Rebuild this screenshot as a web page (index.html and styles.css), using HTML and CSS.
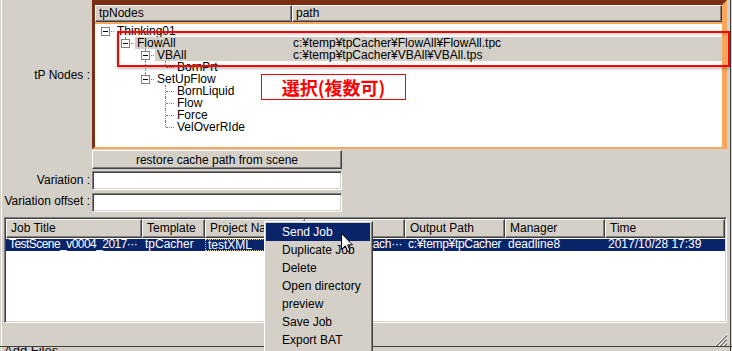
FILE: index.html
```html
<!DOCTYPE html>
<html lang="en">
<head>
  <meta charset="UTF-8" />
  <title>tpCacher Submitter</title>
  <link rel="stylesheet" href="styles.css">
</head>
<body>
  <div class="window">

    <div class="form">
      <div class="label">tP Nodes :</div>
      <div class="tree-frame">
        <div class="tree-head">
          <div class="head-cell">tpNodes</div>
          <div class="head-cell">path</div>
        </div>
        <div class="tree-body">
          <div class="tree-row">
            <div class="tree-cell"><span class="twig root"><i class="box"></i></span><span class="node">Thinking01</span></div>
            <div class="path-cell"></div>
          </div>
          <div class="tree-row sel">
            <div class="tree-cell"><span class="guide"></span><span class="twig end"><i class="box"></i></span><span class="node">FlowAll</span></div>
            <div class="path-cell">c:¥temp¥tpCacher¥FlowAll¥FlowAll.tpc</div>
          </div>
          <div class="tree-row sel">
            <div class="tree-cell"><span class="guide"></span><span class="guide"></span><span class="twig"><i class="box"></i></span><span class="node">VBAll</span></div>
            <div class="path-cell">c:¥temp¥tpCacher¥VBAll¥VBAll.tps</div>
          </div>
          <div class="tree-row">
            <div class="tree-cell"><span class="guide"></span><span class="guide"></span><span class="guide pipe"></span><span class="twig end"></span><span class="node">BornPrt</span></div>
            <div class="path-cell"></div>
          </div>
          <div class="tree-row">
            <div class="tree-cell"><span class="guide"></span><span class="guide"></span><span class="twig end"><i class="box"></i></span><span class="node">SetUpFlow</span></div>
            <div class="path-cell"></div>
          </div>
          <div class="tree-row">
            <div class="tree-cell"><span class="guide"></span><span class="guide"></span><span class="guide"></span><span class="twig"></span><span class="node">BornLiquid</span></div>
            <div class="path-cell"></div>
          </div>
          <div class="tree-row">
            <div class="tree-cell"><span class="guide"></span><span class="guide"></span><span class="guide"></span><span class="twig"></span><span class="node">Flow</span></div>
            <div class="path-cell"></div>
          </div>
          <div class="tree-row">
            <div class="tree-cell"><span class="guide"></span><span class="guide"></span><span class="guide"></span><span class="twig"></span><span class="node">Force</span></div>
            <div class="path-cell"></div>
          </div>
          <div class="tree-row">
            <div class="tree-cell"><span class="guide"></span><span class="guide"></span><span class="guide"></span><span class="twig end"></span><span class="node">VelOverRIde</span></div>
            <div class="path-cell"></div>
          </div>
        </div>
      </div>

      <div></div>
      <button class="btn">restore cache path from scene</button>

      <div class="label">Variation :</div>
      <input class="field field-first" type="text">

      <div class="label">Variation offset :</div>
      <input class="field field-second" type="text">
    </div>

    <div class="jobs">
      <div class="jobs-head">
        <div class="col-head">Job Title</div>
        <div class="col-head">Template</div>
        <div class="col-head">Project Name</div>
        <div class="col-head">Cache Path</div>
        <div class="col-head">Output Path</div>
        <div class="col-head">Manager</div>
        <div class="col-head">Time</div>
      </div>
      <div class="job-row">
        <div class="cell tighter">TestScene_v0004_2017···</div>
        <div class="cell">tpCacher</div>
        <div class="cell focus">testXML</div>
        <div class="cell tight">c:¥temp¥tpCach···</div>
        <div class="cell tight">c:¥temp¥tpCacher</div>
        <div class="cell">deadline8</div>
        <div class="cell">2017/10/28 17:39</div>
      </div>
    </div>

    <div class="foot"></div>
    <div class="foot-strip"><span>Add Files</span></div>

    <!-- annotation overlays -->
    <div class="mark"></div>
    <div class="note">選択(複数可)</div>

    <!-- context menu -->
    <ul class="menu">
      <li class="hl">Send Job</li>
      <li>Duplicate Job</li>
      <li>Delete</li>
      <li>Open directory</li>
      <li>preview</li>
      <li>Save Job</li>
      <li>Export BAT</li>
    </ul>

    <svg class="cursor" width="12" height="19" viewBox="0 0 12 19">
      <path d="M0.5 0.5 V16.5 L4.3 12.8 L6.8 18.5 L9 17.5 L6.6 11.9 H11.5 Z" fill="#fff" stroke="#000" stroke-width="1" stroke-linejoin="miter"/>
    </svg>

    <svg class="grip" width="14" height="14" viewBox="0 0 14 14">
      <path d="M13 1 L1 13 M13 5 L5 13 M13 9 L9 13" stroke="#fff" stroke-width="1"/>
      <path d="M13 2 L2 13 M13 3 L3 13 M13 6 L6 13 M13 7 L7 13 M13 10 L10 13 M13 11 L11 13" stroke="#808080" stroke-width="1"/>
    </svg>
  </div>
</body>
</html>
```

FILE: styles.css
```css
body {
  margin: 0;
  font-family: "Liberation Sans", Arial, sans-serif;
  font-size: 12px;
  color: #000;
  background-color: #d4d0c8;
}

.window {
  position: relative;
  width: 732px;
  height: 351px;
  overflow: hidden;
  background: linear-gradient(to right, #d4d0c8 1px, #fff 1px 2px, #d4d0c8 2px 730px, #404040 730px 731px, #d4d0c8 731px);
}

/* top form */
.form {
  display: grid;
  grid-template-columns: 92px auto;
  justify-items: start;
  align-items: center;
}

.label {
  justify-self: end;
  padding-right: 2px;
  white-space: nowrap;
}

.tree-frame {
  width: 635px;
  height: 149px;
  box-sizing: border-box;
  border-style: solid;
  border-width: 5px 5px 2px 3px;
  border-color: #7c2e14 #f7a65a #f7a65a #7c2e14;
  display: flex;
  flex-direction: column;
  background: #fff;
}

.tree-head {
  display: grid;
  grid-template-columns: 197px 1fr;
  height: 17px;
  border-bottom: 2px solid #f7a65a;
}

.head-cell,
.col-head {
  background: #d4d0c8;
  border-top: 1px solid #fff;
  border-left: 1px solid #fff;
  border-right: 1px solid #404040;
  border-bottom: 1px solid #404040;
  box-shadow: inset -1px -1px #808080;
  padding-left: 3px;
  line-height: 15px;
  white-space: nowrap;
  overflow: hidden;
}

.tree-body {
  flex: 1;
  padding-top: 1px;
  overflow: hidden;
}

.tree-row {
  display: grid;
  grid-template-columns: 198px 1fr;
  height: 12px;
  line-height: 12px;
  white-space: nowrap;
}

.tree-cell {
  display: flex;
  padding-left: 3px;
}

.node {
  flex: 1;
  padding: 0 2px;
}

.path-cell {
  overflow-x: clip;
}

.tree-row.sel .node,
.tree-row.sel .path-cell {
  background-color: #d4d0c8;
}

.guide,
.twig {
  position: relative;
  flex: none;
  height: 12px;
}

.guide {
  width: 20px;
}

.twig {
  width: 17px;
}

.guide.pipe::before,
.twig::before {
  content: "";
  position: absolute;
  left: 7px;
  top: 0;
  bottom: 0;
  border-left: 1px dotted #808080;
}

.twig.end::before {
  bottom: 6px;
}

.twig.root::before {
  display: none;
}

.twig::after {
  content: "";
  position: absolute;
  left: 8px;
  right: 1px;
  top: 6px;
  border-top: 1px dotted #808080;
}

.box {
  position: absolute;
  left: 3px;
  top: 2px;
  width: 9px;
  height: 9px;
  box-sizing: border-box;
  border: 1px solid #808080;
  background: #fff;
  z-index: 1;
}

.box::after {
  content: "";
  position: absolute;
  left: 1px;
  top: 3px;
  width: 5px;
  height: 1px;
  background: #000;
}

.btn {
  margin-top: 1px;
  width: 250px;
  height: 19px;
  padding: 0;
  font: inherit;
  color: #000;
  background: #d4d0c8;
  border-style: solid;
  border-width: 1px;
  border-color: #fff #404040 #404040 #fff;
  box-shadow: inset -1px -1px #808080;
}

.field {
  width: 250px;
  height: 19px;
  box-sizing: border-box;
  margin: 0;
  padding: 0 2px;
  font: inherit;
  background: #fff;
  border-style: solid;
  border-width: 1px;
  border-color: #808080 #fff #fff #808080;
  box-shadow: inset 1px 1px #404040, inset -1px -1px #d4d0c8;
}

.field-first {
  margin-top: 2px;
}

.field-second {
  margin-top: 3px;
}

/* job list */
.jobs {
  margin: 5px 0 0 4px;
  width: 723px;
  height: 106px;
  box-sizing: border-box;
  border-style: solid;
  border-width: 1px;
  border-color: #808080 #fff #fff #808080;
  box-shadow: inset 1px 1px #404040, inset -1px -1px #d4d0c8;
  padding: 1px;
  background: #fff;
}

.jobs-head,
.job-row {
  display: grid;
  grid-template-columns: 136px 63px 100px 100px 100px 100px 120px;
}

.jobs-head {
  height: 19px;
}

.col-head {
  line-height: 17px;
  padding-left: 4px;
}

.job-row {
  margin-top: 1px;
  height: 12px;
  line-height: 11px;
  background-color: #0a246a;
  color: #fff;
}

.cell {
  padding-left: 3px;
  white-space: nowrap;
  overflow-x: clip;
}

.cell.tight {
  letter-spacing: -0.3px;
}

.cell.tighter {
  letter-spacing: -0.55px;
}

.cell.focus {
  padding-left: 2px;
  border: 1px dotted #e8d890;
  border-right: none;
  line-height: 10px;
}

.foot {
  height: 23px;
  border-bottom: 1px solid #404040;
}

.foot-strip {
  height: 4px;
  overflow: hidden;
  padding-left: 4px;
  font-size: 13px;
  line-height: 18px;
}

.foot-strip span {
  display: block;
  margin-top: -5px;
}

/* annotations */
.mark {
  position: absolute;
  left: 117px;
  top: 31px;
  width: 613px;
  height: 36px;
  box-sizing: border-box;
  border: 2px solid #ff0000;
  box-shadow: 0 2px 3px rgba(0, 0, 0, 0.25), inset 0 2px 3px rgba(0, 0, 0, 0.15);
}

.note {
  position: absolute;
  left: 261px;
  top: 74px;
  width: 145px;
  height: 26px;
  box-sizing: border-box;
  border: 1px solid #ff0000;
  background: #fff;
  color: #ff0000;
  font-family: "Noto Sans CJK JP", sans-serif;
  font-size: 18px;
  font-weight: bold;
  line-height: 24px;
  text-align: center;
}

/* context menu */
.menu {
  position: absolute;
  left: 264px;
  top: 221px;
  width: 109px;
  height: 140px;
  box-sizing: border-box;
  margin: 0;
  padding: 1px 2px 0 1px;
  list-style: none;
  background: #d4d0c8;
  border-style: solid;
  border-width: 1px;
  border-color: #fff #404040 #404040 #fff;
  box-shadow: inset -1px -1px #808080;
}

.menu li {
  height: 18px;
  line-height: 18px;
  padding-left: 16px;
  white-space: nowrap;
}

.menu li.hl {
  background-color: #0a246a;
  color: #fff;
}

.cursor {
  position: absolute;
  left: 341px;
  top: 233px;
}

.grip {
  position: absolute;
  left: 714px;
  top: 333px;
}
```
